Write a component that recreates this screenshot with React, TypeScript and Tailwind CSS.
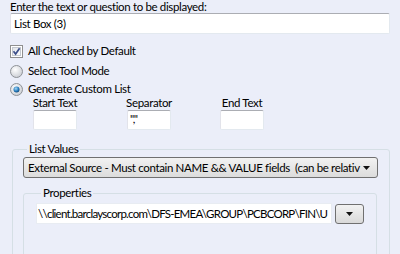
import React from "react";

const font = { fontFamily: 'Lato, "Open Sans", sans-serif' };

function Radio({ checked }: { checked?: boolean }) {
  return (
    <svg width="13" height="13" viewBox="0 0 13 13">
      <defs>
        <radialGradient id={checked ? "rg1" : "rg0"} cx="40%" cy="35%" r="70%">
          <stop offset="0%" stopColor="#ffffff" />
          <stop offset="100%" stopColor="#c9ccd2" />
        </radialGradient>
        <radialGradient id="dot" cx="40%" cy="35%" r="70%">
          <stop offset="0%" stopColor="#a6d8f5" />
          <stop offset="60%" stopColor="#2a7fc0" />
          <stop offset="100%" stopColor="#0b3f6f" />
        </radialGradient>
      </defs>
      <circle cx="6.5" cy="6.5" r="6" fill={`url(#${checked ? "rg1" : "rg0"})`} stroke="#8e9297" strokeWidth="1" />
      {checked && <circle cx="6.5" cy="6.5" r="3" fill="url(#dot)" />}
    </svg>
  );
}

function Check() {
  return (
    <svg width="13" height="13" viewBox="0 0 13 13">
      <defs>
        <linearGradient id="cb" x1="0" y1="0" x2="1" y2="1">
          <stop offset="0%" stopColor="#e0e3e8" />
          <stop offset="100%" stopColor="#ffffff" />
        </linearGradient>
      </defs>
      <rect x="0.5" y="0.5" width="12" height="12" fill="#fff" stroke="#8f8f8f" />
      <rect x="2.5" y="2.5" width="8" height="8" fill="url(#cb)" stroke="#c4c8cf" />
      <path d="M3.5 6.3 L5.6 9 L9.6 3.2" fill="none" stroke="#3d4f8a" strokeWidth="1.7" />
    </svg>
  );
}

function Arrow() {
  return (
    <svg width="8" height="4" viewBox="0 0 8 4">
      <path d="M0 0 H7 L3.5 4 Z" fill="#111" />
    </svg>
  );
}

const textBox =
  "bg-white border border-[#e3e9ef] border-t-[#abadb3] border-l-[#e2e3ea] rounded-[2px]";

export default function App() {
  return (
    <div
      className="w-[400px] h-[254px] overflow-hidden bg-[#ebeef9] text-[11.5px] tracking-[-0.35px] text-black leading-[14px]"
      style={font}
    >
      <div className="pl-[10px] pr-[10px] pt-[0px]">
        <div className="h-[13px] leading-[13px] whitespace-nowrap">Enter the text or question to be displayed:</div>
        <div className={`${textBox} h-[21px] w-[380px] flex items-center pl-[3px]`}>List Box (3)</div>

        <div className="mt-[10px] flex items-center gap-[5px] h-[14px]">
          <Check />
          <span>All Checked by Default</span>
        </div>
        <div className="mt-[6px] flex items-center gap-[5px] h-[14px]">
          <Radio />
          <span>Select Tool Mode</span>
        </div>
        <div className="mt-[4px] flex items-center gap-[5px] h-[14px]">
          <Radio checked />
          <span>Generate Custom List</span>
        </div>

        <div className="flex pl-[23px]">
          <div className="w-[44px] flex flex-col items-center">
            <div className="h-[14px] leading-[14px] whitespace-nowrap">Start Text</div>
            <div className={`${textBox} h-[20px] w-[44px]`}></div>
          </div>
          <div className="ml-[50px] w-[44px] flex flex-col items-center">
            <div className="h-[14px] leading-[14px] whitespace-nowrap">Separator</div>
            <div className={`${textBox} h-[20px] w-[44px] pl-[2px] leading-[16px] self-stretch`}>&quot;,&quot;</div>
          </div>
          <div className="ml-[49px] w-[44px] flex flex-col items-center">
            <div className="h-[14px] leading-[14px] whitespace-nowrap">End Text</div>
            <div className={`${textBox} h-[20px] w-[44px]`}></div>
          </div>
        </div>

        <fieldset className="mt-[12px] ml-[2px] w-[378px] border border-[#d5dfe5] rounded-[3px] pl-[10px] pr-[10px] h-[120px]">
          <legend className="ml-[4px] px-[2px] leading-[14px]">List Values</legend>
          <div className="mt-[1px] h-[21px] w-[355px] rounded-[3px] border border-[#707070] bg-gradient-to-b from-[#f2f2f2] to-[#dcdcdc] flex items-center pl-[4px] pr-[6px] whitespace-nowrap overflow-hidden">
            <span className="flex-1 overflow-hidden">External Source - Must contain NAME &amp;&amp; VALUE fields&nbsp; (can be relativ</span>
            <Arrow />
          </div>

          <fieldset className="mt-[8px] w-[354px] border border-[#d5dfe5] rounded-[3px] pl-[12px] h-[80px]">
            <legend className="ml-[5px] px-[2px] leading-[14px]">Properties</legend>
            <div className="mt-[3px] flex items-center gap-[3px]">
              <div className="h-[21px] w-[296px] bg-white border border-[#e8ecf2] flex items-center pl-[1px] whitespace-nowrap overflow-hidden tracking-[-0.75px]">
                \\client.barclayscorp.com\DFS-EMEA\GROUP\PCBCORP\FIN\U
              </div>
              <div className="h-[20px] w-[29px] rounded-[3px] border border-[#707070] bg-gradient-to-b from-[#f2f2f2] to-[#d9d9d9] flex items-center justify-center">
                <Arrow />
              </div>
            </div>
          </fieldset>
        </fieldset>
      </div>
    </div>
  );
}
